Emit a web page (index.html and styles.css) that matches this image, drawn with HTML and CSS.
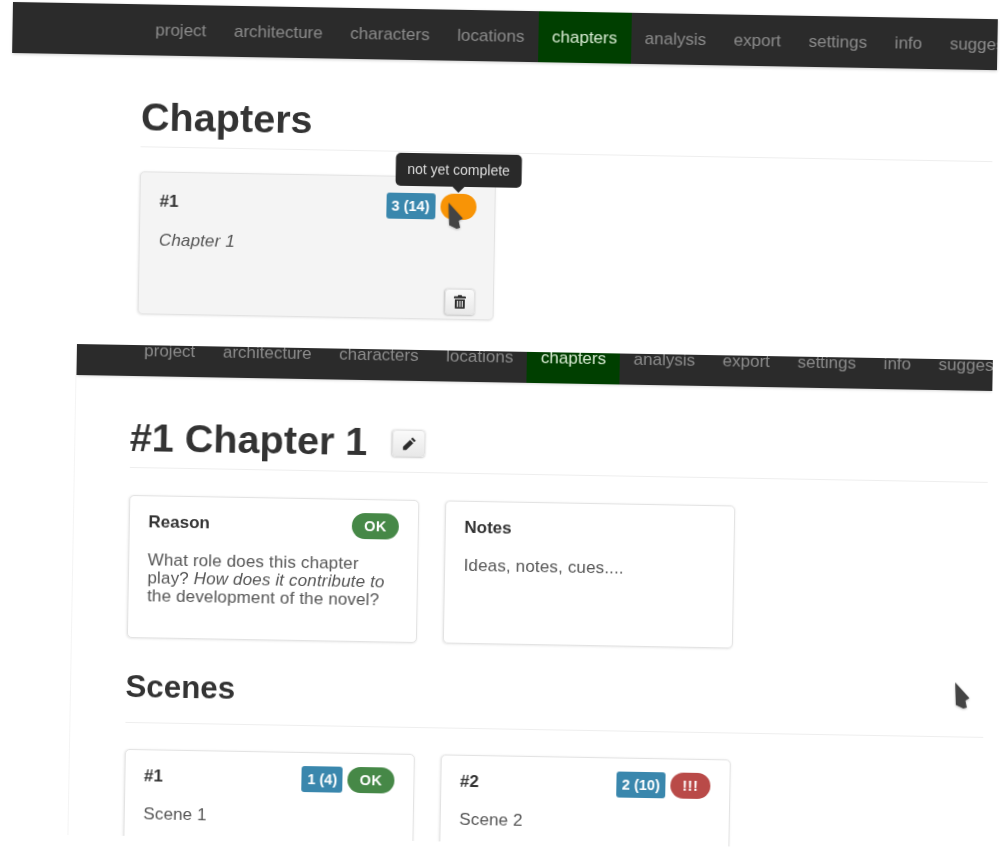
FILE: index.html
```html
<!DOCTYPE html>
<html lang="en">
  <head>
    <meta charset="UTF-8" />
    <title>Chapters</title>
    <link rel="stylesheet" href="styles.css">
  </head>
  <body>
    <!-- First capture: chapter list -->
    <section class="shot shot-list">
      <nav class="navbar">
        <a href="#">project</a>
        <a href="#">architecture</a>
        <a href="#">characters</a>
        <a href="#">locations</a>
        <a href="#" class="active">chapters</a>
        <a href="#">analysis</a>
        <a href="#">export</a>
        <a href="#">settings</a>
        <a href="#">info</a>
        <a href="#">suggestions</a>
      </nav>
      <div class="content">
        <h1 class="page-title">Chapters</h1>
        <div class="well grey">
          <div class="well-head">
            <strong>#1</strong>
            <div class="tags">
              <span class="tag count">3 (14)</span>
              <span class="tag status orange">
                <span class="tooltip">not yet complete</span>
              </span>
            </div>
          </div>
          <p><em>Chapter 1</em></p>
          <div class="well-foot">
            <button class="icon-btn" title="delete">
              <svg width="12" height="14" viewBox="0 0 14 16">
                <path fill="#2b2b2b" d="M5 0h4l.6 1.600H13a1 1 0 0 1 1 1V4H0V2.600a1 1 0 0 1 1-1h3.400zM1.200 5h11.600v10a1 1 0 0 1-1 1H2.200a1 1 0 0 1-1-1zm2.300 1.800v7.400h1.300V6.800zm2.900 0v7.400h1.300V6.800zm2.800 0v7.400h1.300V6.800z" fill-rule="evenodd" />
              </svg>
            </button>
          </div>
        </div>
      </div>
      <svg class="cursor cursor-a" width="16" height="28" viewBox="0 0 16 28">
        <path fill="#444" d="M0 0l14.500 15.500-4 2.500 1.500 7-3.500 1-7.500-3.500z" />
      </svg>
    </section>

    <!-- Second capture: single chapter -->
    <section class="shot shot-detail">
      <nav class="navbar">
        <a href="#">project</a>
        <a href="#">architecture</a>
        <a href="#">characters</a>
        <a href="#">locations</a>
        <a href="#" class="active">chapters</a>
        <a href="#">analysis</a>
        <a href="#">export</a>
        <a href="#">settings</a>
        <a href="#">info</a>
        <a href="#">suggestions</a>
      </nav>
      <div class="content">
        <h1 class="page-title">
          #1 Chapter 1
          <button class="icon-btn edit" title="edit">
            <svg width="14" height="14" viewBox="0 0 14 14">
              <path fill="#2b2b2b" d="M10.200.6l3.200 3.200-1.500 1.500-3.200-3.200zM7.800 3l3.200 3.200-7 7H.8v-3.200z" />
            </svg>
          </button>
        </h1>
        <div class="well-row">
          <div class="well">
            <div class="well-head">
              <strong>Reason</strong>
              <div class="tags">
                <span class="tag status green">OK</span>
              </div>
            </div>
            <p>What role does this chapter play? <em>How does it contribute to</em> the development of the novel?</p>
          </div>
          <div class="well">
            <div class="well-head">
              <strong>Notes</strong>
            </div>
            <p>Ideas, notes, cues....</p>
          </div>
        </div>
        <h2 class="section-title">Scenes</h2>
        <div class="well-row">
          <div class="well">
            <div class="well-head">
              <strong>#1</strong>
              <div class="tags">
                <span class="tag count">1 (4)</span>
                <span class="tag status green">OK</span>
              </div>
            </div>
            <p>Scene 1</p>
          </div>
          <div class="well">
            <div class="well-head">
              <strong>#2</strong>
              <div class="tags">
                <span class="tag count">2 (10)</span>
                <span class="tag status red">!!!</span>
              </div>
            </div>
            <p>Scene 2</p>
          </div>
        </div>
      </div>
      <svg class="cursor cursor-b" width="16" height="28" viewBox="0 0 16 28">
        <path fill="#444" d="M0 0l14.500 15.500-4 2.500 1.500 7-3.500 1-7.500-3.500z" />
      </svg>
    </section>
  </body>
</html>
```

FILE: styles.css
```css
* {
  box-sizing: border-box;
  margin: 0;
  padding: 0;
}

body {
  width: 1000px;
  height: 854px;
  overflow: hidden;
  position: relative;
  background-color: #fff;
  font-family: "Liberation Sans", Arial, sans-serif;
  font-size: 17px;
  color: #333;
}

/* the two captures sit tilted on the page */
.shot {
  position: absolute;
  transform: rotate(1deg);
  transform-origin: 0 0;
  background-color: #fff;
  filter: blur(0.4px);
}

.shot-list {
  left: 13px;
  top: 2px;
  width: 985px;
  height: 335px;
}

.shot-detail {
  left: 76px;
  top: 344px;
  width: 917px;
  height: 491px;
  overflow: hidden;
  border-left: 1px solid #f4f4f4;
}

.navbar {
  display: flex;
  align-items: center;
  height: 51px;
  overflow: hidden;
  padding-left: 129px;
  background-color: #2b2b2b;
  box-shadow: 0 1px 3px rgba(0, 0, 0, 0.2);
  white-space: nowrap;
}

.navbar a {
  display: block;
  flex: none;
  padding: 0 13.800px;
  line-height: 51px;
  color: #8c8c8c;
  text-decoration: none;
}

.navbar a.active {
  background-color: #003f00;
  color: #d9ecd3;
}

.shot-detail .navbar {
  align-items: flex-start;
  height: 31px;
  padding-left: 53.500px;
}

.shot-detail .navbar a {
  height: 31px;
  line-height: 11px;
}

.content {
  padding: 0 3px 0 130px;
}

.shot-detail .content {
  padding-left: 54.500px;
}

.page-title {
  display: flex;
  align-items: center;
  gap: 25px;
  margin-top: 39px;
  padding-bottom: 8px;
  border-bottom: 1px solid #eee;
  margin-bottom: 24px;
  font-size: 39.600px;
  line-height: 44px;
}

.shot-detail .page-title {
  margin-bottom: 27px;
}

.section-title {
  margin-top: 31px;
  padding-bottom: 17px;
  border-bottom: 1px solid #eee;
  margin-bottom: 26px;
  font-size: 31.300px;
  line-height: 36px;
}

.well-row {
  display: flex;
  gap: 26px;
}

.well {
  display: flex;
  flex-direction: column;
  width: 290px;
  height: 143px;
  padding: 13px 18.500px 4px 19px;
  background-color: #fff;
  border: 1px solid #e3e3e3;
  border-radius: 5px;
  box-shadow: 0 1px 2px rgba(0, 0, 0, 0.08);
}

.well.grey {
  width: 356px;
  padding-top: 16px;
  background-color: #f4f4f4;
}

.well-head {
  display: flex;
  justify-content: space-between;
  align-items: center;
  min-height: 26px;
  margin-bottom: 17px;
}

.shot-detail .well-head {
  margin-bottom: 15.500px;
}

.well p {
  line-height: 18px;
  letter-spacing: 0.15px;
  color: #555;
}

.well-foot {
  display: flex;
  justify-content: flex-end;
  margin-top: auto;
}

.tags {
  display: flex;
  gap: 5px;
}

.tag {
  display: block;
  height: 26px;
  padding: 0 5.500px;
  font-size: 14.500px;
  font-weight: bold;
  line-height: 26px;
  color: #fff;
}

.count {
  background-color: #3a87ad;
  border-radius: 3px;
}

.status {
  position: relative;
  min-width: 36px;
  padding: 0 12px;
  border-radius: 13px;
  letter-spacing: 0.5px;
}

.orange {
  background-color: #f89406;
}

.green {
  background-color: #468847;
}

.red {
  background-color: #b94a48;
}

.tooltip {
  position: absolute;
  left: 50%;
  bottom: 33px;
  transform: translateX(-50%);
  padding: 0 12px;
  background-color: #292929;
  border-radius: 5px;
  font-size: 14px;
  font-weight: normal;
  letter-spacing: 0;
  line-height: 33px;
  color: #ddd;
  white-space: nowrap;
}

.tooltip::after {
  content: "";
  position: absolute;
  left: 50%;
  top: 100%;
  margin-left: -6px;
  border-style: solid;
  border-width: 6px 6px 0;
  border-color: #292929 transparent transparent;
}

.icon-btn {
  display: flex;
  align-items: center;
  justify-content: center;
  width: 30px;
  height: 26px;
  background: linear-gradient(#fafafa, #e8e8e8);
  border: 1px solid #e2e2e2;
  border-radius: 4px;
  box-shadow: 0 1px 2px rgba(0, 0, 0, 0.2);
}

.icon-btn.edit {
  width: 33px;
  height: 27px;
  margin-top: 3px;
}

.cursor {
  position: absolute;
  filter: drop-shadow(0 1px 1px rgba(0, 0, 0, 0.25));
}

.cursor-a {
  left: 439px;
  top: 193px;
}

.cursor-b {
  left: 884px;
  top: 323px;
}
```
